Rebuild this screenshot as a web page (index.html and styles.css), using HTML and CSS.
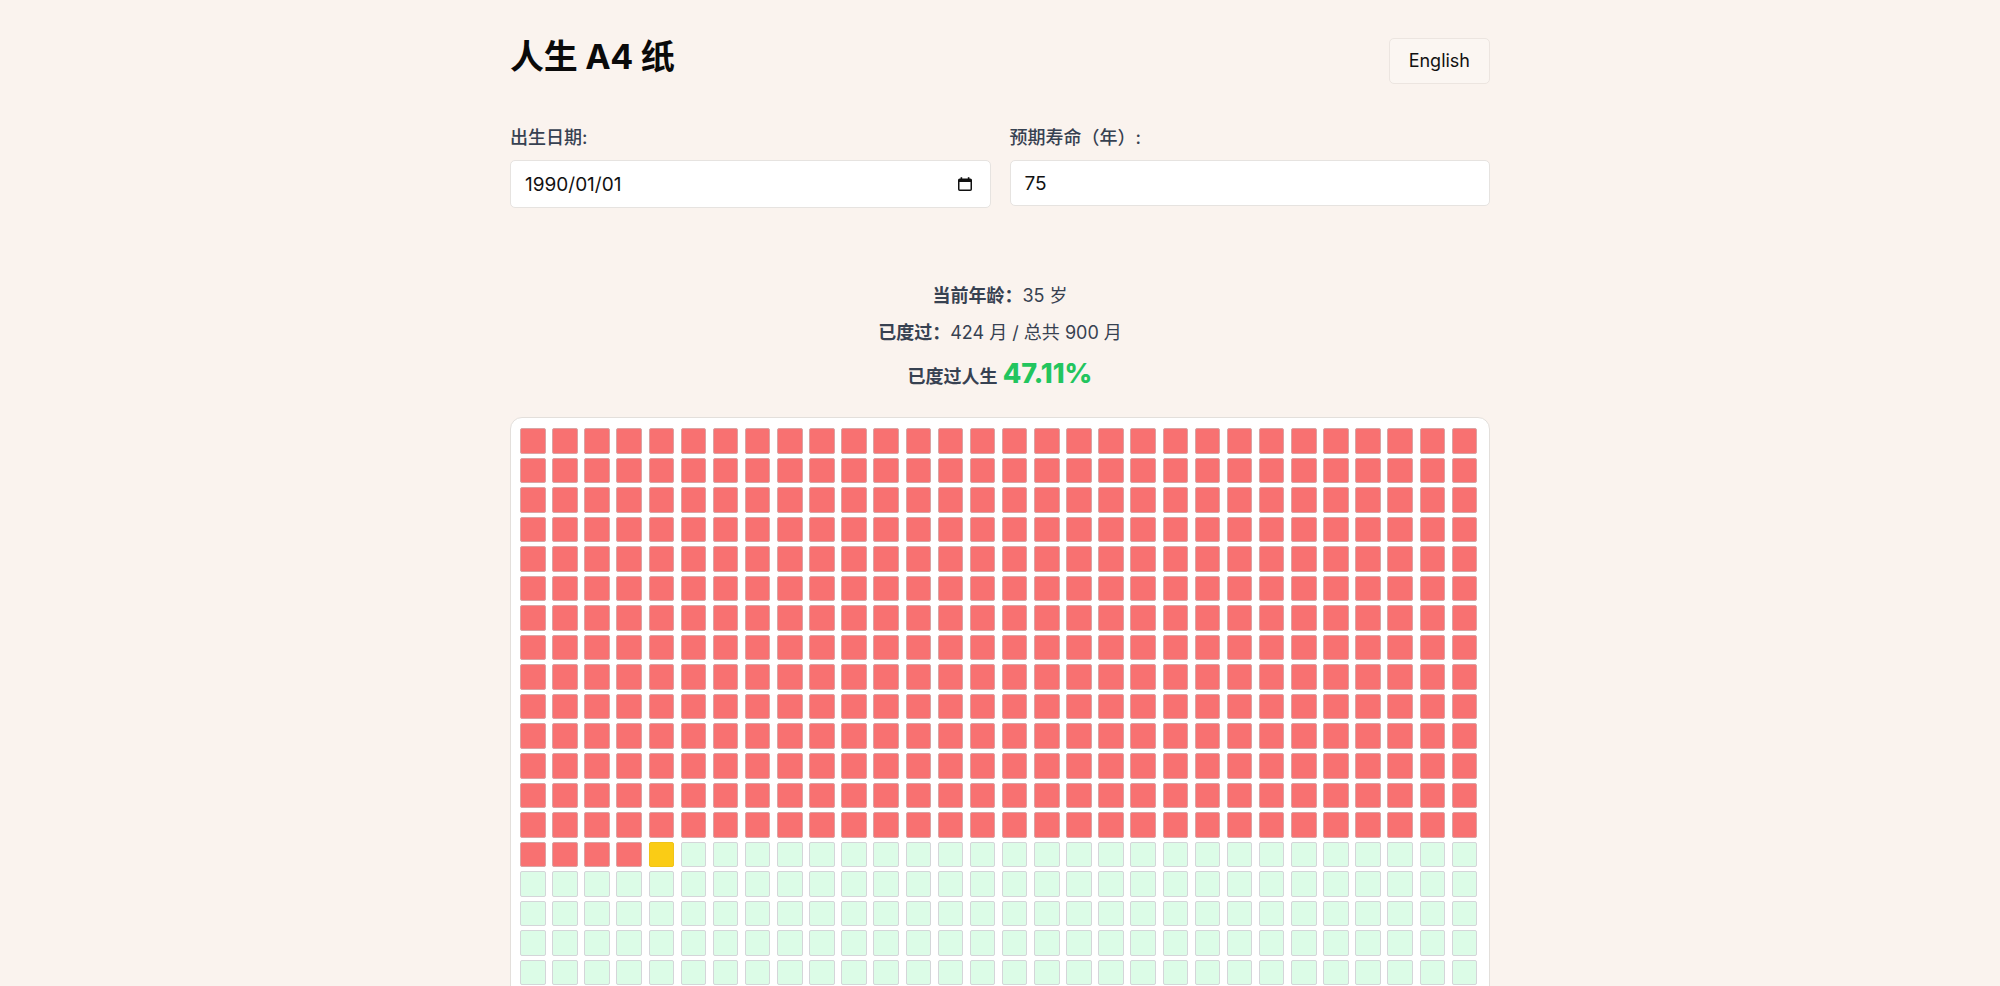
FILE: index.html
```html
<!DOCTYPE html>
<html lang="zh-CN">
<head>
<meta charset="utf-8">
<title>人生 A4 纸</title>
<link rel="stylesheet" href="styles.css">
</head>
<body>
<div class="page">
  <header class="header">
    <h1 class="title">人生 A4 纸</h1>
    <button class="lang-btn">English</button>
  </header>

  <section class="form">
    <div class="field">
      <label class="label">出生日期:</label>
      <div class="input input-date">
        <span class="input-text">1990/01/01</span>
        <svg class="cal-icon" width="16" height="16" viewBox="0 0 16 16" aria-hidden="true">
          <rect x="1.75" y="3.25" width="12.5" height="11" rx="1" fill="none" stroke="#111" stroke-width="1.5"/>
          <rect x="1.75" y="3.25" width="12.5" height="2.75" fill="#111"/>
          <rect x="3.6" y="1.2" width="1.6" height="2.6" fill="#111"/>
          <rect x="10.8" y="1.2" width="1.6" height="2.6" fill="#111"/>
        </svg>
      </div>
    </div>
    <div class="field">
      <label class="label">预期寿命（年）:</label>
      <div class="input input-number"><span class="input-text">75</span></div>
    </div>
  </section>

  <section class="stats">
    <p class="stat"><span class="stat-key">当前年龄：</span>35 岁</p>
    <p class="stat"><span class="stat-key">已度过：</span>424 月 / 总共 900 月</p>
    <p class="stat stat-big"><span class="stat-key">已度过人生</span> <span class="percent">47.11%</span></p>
  </section>

  <section class="board">
    <div class="grid" id="grid"></div>
  </section>
</div>
<script src="script.js"></script>
</body>
</html>
```

FILE: styles.css
```css
* { box-sizing: border-box; }

html, body {
  margin: 0;
  padding: 0;
}

body {
  background: #faf3ee;
  font-family: Inter, "Noto Sans CJK SC", sans-serif;
  color: #111827;
}

.page {
  width: 980px;
  margin: 0 auto;
  padding-top: 38px;
}

.header {
  display: flex;
  justify-content: space-between;
  align-items: flex-start;
}

.title {
  margin: 0;
  font-size: 34px;
  line-height: 37px;
  font-weight: 700;
  color: #0a0a0a;
  letter-spacing: -0.3px;
}

.lang-btn {
  font-family: Inter, "Noto Sans CJK SC", sans-serif;
  font-size: 18px;
  line-height: 24px;
  height: 46px;
  padding: 0 19px;
  background: #fbf6f2;
  border: 1px solid #ece5e0;
  border-radius: 5px;
  color: #111;
}

.form {
  display: grid;
  grid-template-columns: 1fr 1fr;
  column-gap: 19px;
  margin-top: 41px;
  align-items: start;
}

.field {
  display: flex;
  flex-direction: column;
}

.label {
  font-size: 18px;
  line-height: 25px;
  font-weight: 500;
  color: #374151;
  margin-bottom: 10px;
}

.input {
  display: flex;
  align-items: center;
  justify-content: space-between;
  background: #fff;
  border: 1px solid #e6e3e0;
  border-radius: 5px;
  padding: 0 17px 0 14px;
  font-size: 19px;
  color: #111;
}

.input-date { height: 48px; }
.input-number { height: 46px; }

.cal-icon { display: block; }

.stats {
  margin-top: 74px;
  text-align: center;
  color: #374151;
}

.stat {
  margin: 0 0 10px;
  font-size: 18px;
  line-height: 27px;
}

.stat-key {
  font-weight: 600;
}

.stat-big {
  line-height: 36px;
  margin-bottom: 22px;
}

.percent {
  font-size: 27px;
  font-weight: 800;
  color: #22c55e;
}

.board {
  background: #fff;
  border: 1px solid #e3dfdb;
  border-radius: 12px;
  padding: 10px 12px 10px 9px;
}

.grid {
  display: grid;
  grid-template-columns: repeat(30, 25.5px);
  column-gap: 6.63px;
  row-gap: 4.05px;
}

.cell {
  height: 25.5px;
  border: 1px solid #d4d6d9;
  border-radius: 2px;
  background: #dcfce7;
}

.cell-past { background: #f87171; border-color: #d9a4a4; }
.cell-now { background: #facc15; border-color: #f0c419; }
```

FILE: script.js
```js
(function () {
  var grid = document.getElementById('grid');
  var total = 900, lived = 424;
  var frag = document.createDocumentFragment();
  for (var i = 0; i < total; i++) {
    var d = document.createElement('div');
    d.className = 'cell' + (i < lived ? ' cell-past' : (i === lived ? ' cell-now' : ''));
    frag.appendChild(d);
  }
  grid.appendChild(frag);
})();
```
